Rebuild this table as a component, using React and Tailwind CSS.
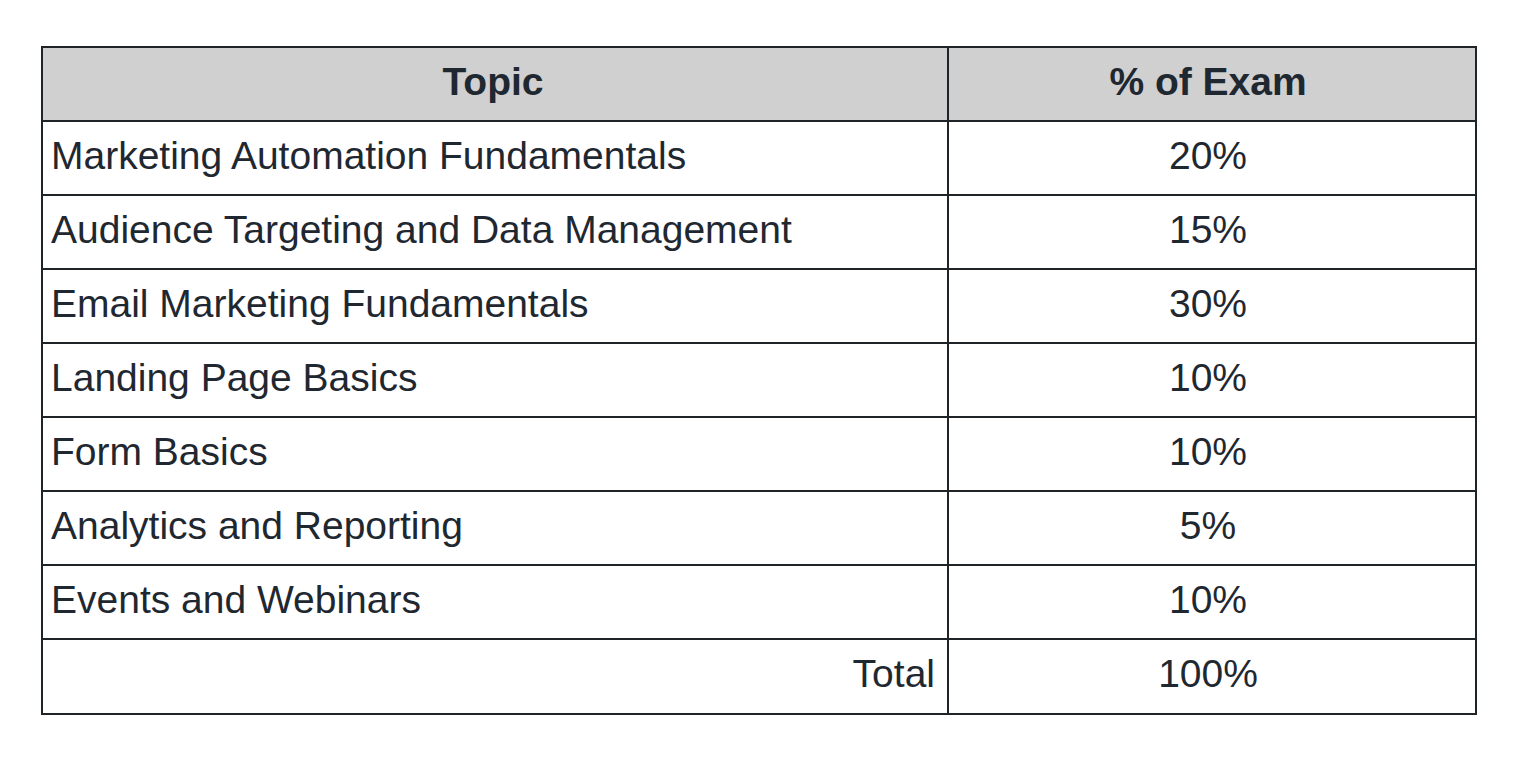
const rows = [
  ["Marketing Automation Fundamentals", "20%"],
  ["Audience Targeting and Data Management", "15%"],
  ["Email Marketing Fundamentals", "30%"],
  ["Landing Page Basics", "10%"],
  ["Form Basics", "10%"],
  ["Analytics and Reporting", "5%"],
  ["Events and Webinars", "10%"],
];

export default function App() {
  return (
    <div className="min-h-screen bg-white pt-[46px] pl-[41px] font-['Liberation_Sans',Arial,sans-serif] text-[#1f2831]">
      <table className="border-collapse border-2 border-[#1f2429] text-[39px] leading-none">
        <thead>
          <tr className="h-[74px] bg-[#d0d0d0]">
            <th className="w-[906px] border-2 border-[#1f2429] pr-1 pb-[6px] font-bold">Topic</th>
            <th className="w-[528px] border-2 border-[#1f2429] pr-2 pb-[6px] font-bold">% of Exam</th>
          </tr>
        </thead>
        <tbody>
          {rows.map(([topic, pct]) => (
            <tr key={topic} className="h-[74px]">
              <td className="border-2 border-[#1f2429] pl-[8px] pb-[6px]">{topic}</td>
              <td className="border-2 border-[#1f2429] pr-2 pb-[6px] text-center">{pct}</td>
            </tr>
          ))}
          <tr className="h-[75px]">
            <td className="border-2 border-[#1f2429] pr-[12px] pb-[6px] text-right">Total</td>
            <td className="border-2 border-[#1f2429] pr-2 pb-[6px] text-center">100%</td>
          </tr>
        </tbody>
      </table>
    </div>
  );
}
